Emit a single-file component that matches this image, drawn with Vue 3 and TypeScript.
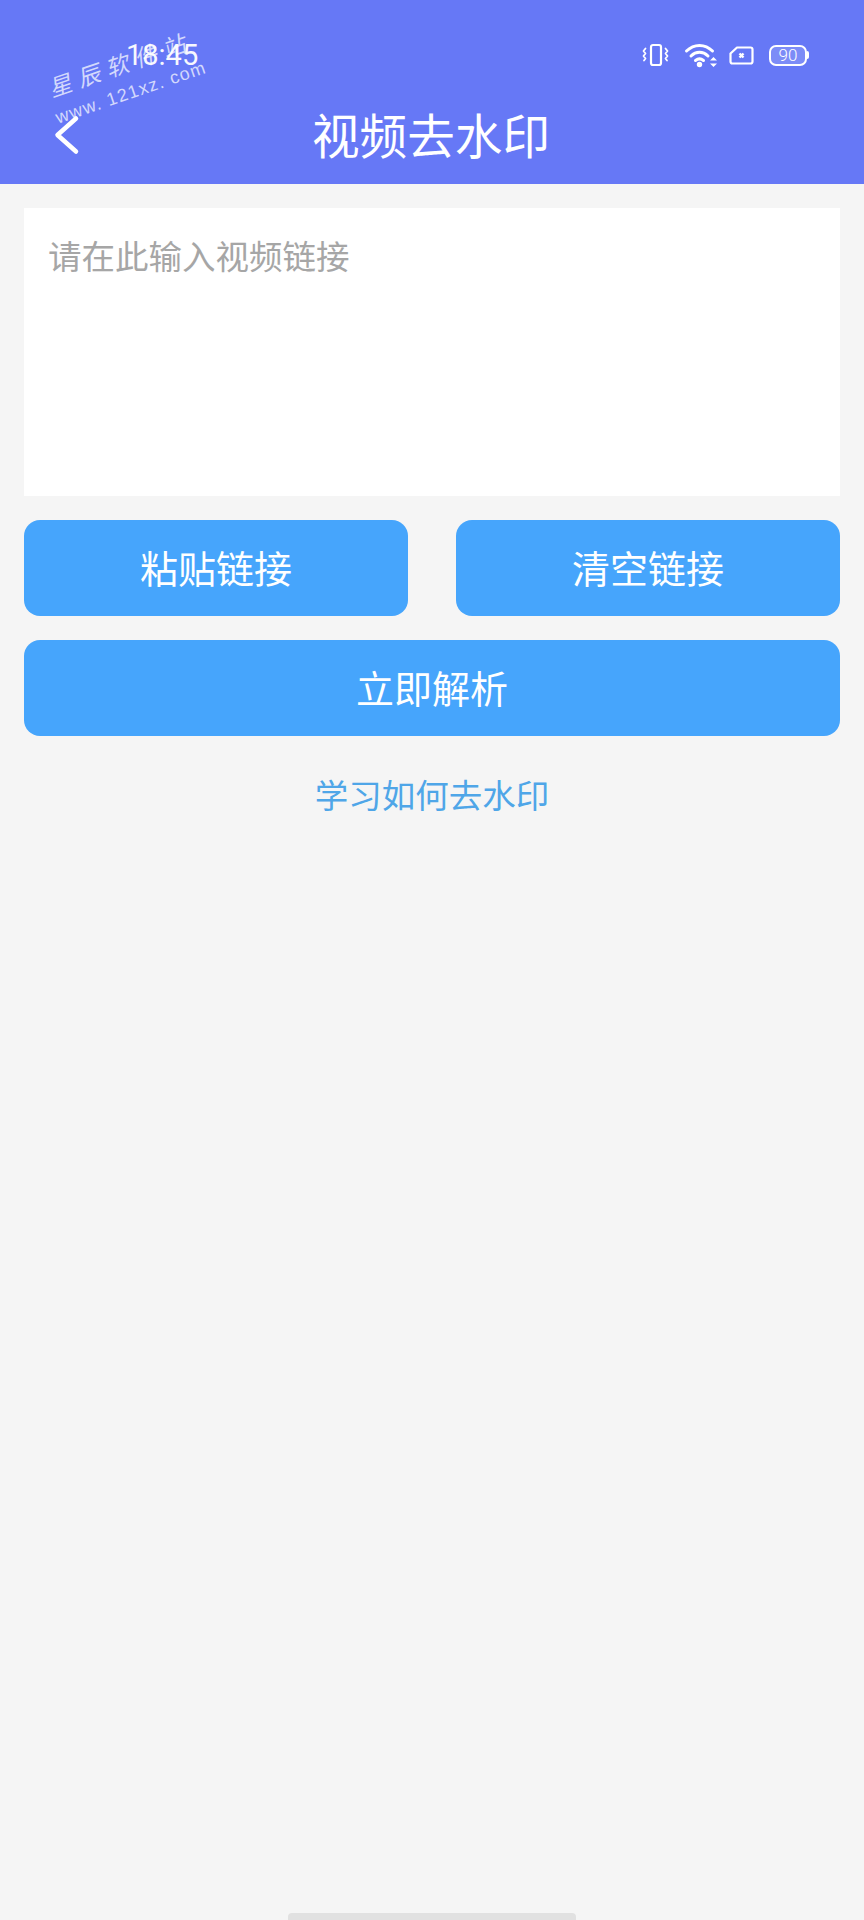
<script setup lang="ts">
const topButtons = ["粘贴链接", "清空链接"];
</script>

<template>
  <div class="page">
    <header class="header">
      <div class="status">
        <span class="time">18:45</span>
        <div class="status-icons">
          <svg class="ic-vibrate" width="27" height="24" viewBox="0 0 27 24" fill="none" stroke="#fff" stroke-width="2.200" stroke-linecap="round" stroke-linejoin="round">
            <rect x="9" y="2" width="10" height="20" rx="2" />
            <path d="M3.500 5.500L1.500 8l2 2.500-2 2.500 2 2.500-1.500 2M23.500 5.500l2 2.500-2 2.500 2 2.500-2 2.500 1.500 2" stroke-width="1.800" />
          </svg>
          <svg class="ic-wifi" width="34" height="25" viewBox="0 0 34 25" fill="none" stroke="#fff" stroke-linecap="round">
            <path d="M2.500 8C10 .5 21 .5 28.500 8" stroke-width="3" />
            <path d="M7 13C12 8 19 8 24 13" stroke-width="3" />
            <path d="M11.500 17.500c2.500-2 5.500-2 8 0" stroke-width="3" />
            <circle cx="15.500" cy="21.500" r="2.700" fill="#fff" stroke="none" />
            <path d="M26 17.500l3.500-3.500 3.500 3.500zM26 20.500l3.500 3.500 3.500-3.500z" fill="#fff" stroke="none" />
          </svg>
          <svg class="ic-sim" width="25" height="19" viewBox="0 0 25 19" fill="none" stroke="#fff" stroke-width="2.200" stroke-linejoin="round">
            <path d="M8 1.500h13.500a2 2 0 0 1 2 2v12a2 2 0 0 1-2 2h-18a2 2 0 0 1-2-2V7.500z" />
            <path d="M10.500 7.500l4 4M14.500 7.500l-4 4" stroke-width="2.400" />
          </svg>
          <div class="battery">
            <div class="battery-body">90</div>
            <div class="battery-tip"></div>
          </div>
        </div>
      </div>
      <div class="nav">
        <svg class="back" width="26" height="42" viewBox="0 0 26 42" fill="none" stroke="#fff" stroke-width="4.500" stroke-linecap="round" stroke-linejoin="round">
          <path d="M22 4.500L3.500 21 22 37.500" />
        </svg>
        <h1 class="title">视频去水印</h1>
      </div>
      <div class="watermark">
        <div class="wm-name">星辰软件站</div>
        <div class="wm-url">www. 121xz. com</div>
      </div>
    </header>

    <main class="content">
      <div class="input-box">请在此输入视频链接</div>
      <div class="btn-row">
        <button v-for="label in topButtons" :key="label" class="btn">{{ label }}</button>
      </div>
      <button class="btn btn-full">立即解析</button>
      <a class="learn">学习如何去水印</a>
    </main>

    <div class="home-bar"></div>
  </div>
</template>

<style>
html,
body {
  margin: 0;
  background: #f5f5f5;
}
</style>

<style scoped>
.page {
  position: relative;
  width: 864px;
  height: 1920px;
  overflow: hidden;
  background: #f5f5f5;
  font-family: "Noto Sans CJK SC", "Noto Sans", sans-serif;
}

.header {
  position: relative;
  height: 184px;
  background: #6678f6;
  color: #fff;
  overflow: hidden;
}

.status {
  display: flex;
  align-items: center;
  justify-content: space-between;
  height: 34px;
  padding: 38px 55px 0 126px;
}

.time {
  font-family: "Roboto", sans-serif;
  font-size: 29px;
  line-height: 34px;
  opacity: 0.95;
}

.status-icons {
  display: flex;
  align-items: center;
  gap: 15px;
}

.ic-sim {
  margin-left: -4px;
}

.battery {
  display: flex;
  align-items: center;
}

.battery-body {
  width: 34px;
  height: 17px;
  border: 2px solid #fff;
  border-radius: 7px;
  font-family: "Roboto", sans-serif;
  font-size: 17px;
  font-weight: 300;
  line-height: 17px;
  text-align: center;
  background: rgba(255, 255, 255, 0.15);
}

.battery-tip {
  width: 2px;
  height: 8px;
  border-radius: 0 2px 2px 0;
  background: #fff;
}

.nav {
  position: relative;
  display: flex;
  justify-content: center;
  align-items: center;
  margin-top: 26px;
  height: 72px;
}

.back {
  position: absolute;
  left: 54px;
  top: 16px;
}

.title {
  margin: 0;
  padding-right: 2px;
  font-size: 47.600px;
  font-weight: 400;
  line-height: 72px;
}

.watermark {
  position: absolute;
  left: 42px;
  top: 68px;
  color: rgba(255, 255, 255, 0.72);
  transform: rotate(-19deg);
  transform-origin: left top;
  pointer-events: none;
}

.wm-name {
  font-size: 23px;
  line-height: 30px;
  letter-spacing: 7px;
  font-style: italic;
  white-space: nowrap;
  margin-top: 6px;
}

.wm-url {
  font-family: "Liberation Sans", sans-serif;
  font-size: 18px;
  line-height: 22px;
  letter-spacing: 1.200px;
  white-space: nowrap;
  margin-left: -3px;
  margin-top: 5px;
}

.content {
  display: flex;
  flex-direction: column;
  gap: 24px;
  padding: 24px 24px 0;
}

.input-box {
  height: 288px;
  box-sizing: border-box;
  padding: 23px 24px;
  background: #fff;
  color: #a6a6a6;
  font-size: 33.500px;
  line-height: 48px;
}

.btn-row {
  display: flex;
  gap: 48px;
}

.btn {
  flex: 1;
  height: 96px;
  border: none;
  border-radius: 16px;
  padding: 0 0 2px;
  background: #46a5fc;
  color: #fff;
  font-family: inherit;
  font-size: 38px;
  line-height: 48px;
}

.btn-full {
  flex: none;
  width: 100%;
}

.learn {
  display: block;
  margin-top: 6px;
  text-align: center;
  color: #4fa6e8;
  font-size: 33.500px;
  line-height: 56px;
}

.home-bar {
  position: absolute;
  left: 288px;
  bottom: 0;
  width: 288px;
  height: 7px;
  border-radius: 4px 4px 0 0;
  background: #e1e1e1;
}
</style>
